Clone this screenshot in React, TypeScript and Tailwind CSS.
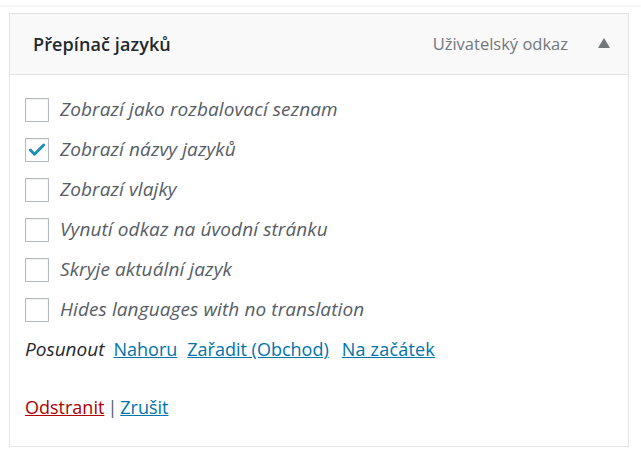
import { Check } from "lucide-react";

const options = [
  { label: "Zobrazí jako rozbalovací seznam", checked: false },
  { label: "Zobrazí názvy jazyků", checked: true },
  { label: "Zobrazí vlajky", checked: false },
  { label: "Vynutí odkaz na úvodní stránku", checked: false },
  { label: "Skryje aktuální jazyk", checked: false },
  { label: "Hides languages with no translation", checked: false },
];

export default function App() {
  return (
    <div className="min-h-screen bg-white font-['Open_Sans',sans-serif] text-[#555d66]">
      <div className="h-[5px] bg-white shadow-[0_1px_3px_rgba(0,0,0,0.08)]" />
      <div className="mx-[9px] mt-[8px] border border-[#e2e4e7] bg-white w-[620px]">
        <div className="flex items-center h-[61px] bg-[#f9f9f9] border-b border-[#e2e4e7] pl-[23px] pr-[18px]">
          <span className="text-[18px] font-semibold text-[#23282d] tracking-[0.1px]">Přepínač jazyků</span>
          <span className="ml-auto text-[16.5px] text-[#72777c]">Uživatelský odkaz</span>
          <svg width="12" height="10" viewBox="0 0 12 10" className="ml-[30px] mb-[3px]">
            <path d="M6 0 L12 10 L0 10 Z" fill="#72777c" />
          </svg>
        </div>
        <div className="pl-[15px] pt-[22px] pb-[26px]">
          <div className="flex flex-col gap-[15px]">
            {options.map((o) => (
              <label key={o.label} className="flex items-center gap-[11px] h-[25px]">
                <span className="w-[24px] h-[24px] border border-[#b4b9be] shadow-[inset_0_1px_2px_rgba(0,0,0,0.07)] bg-white flex items-center justify-center">
                  {o.checked && <Check size={20} strokeWidth={3.5} className="text-[#1e8cbe]" />}
                </span>
                <span className="italic text-[19px] text-[#555d66] tracking-[0.1px]">{o.label}</span>
              </label>
            ))}
          </div>
          <div className="mt-[15px] flex items-center text-[18px] h-[25px]">
            <span className="italic text-[19px] text-[#23282d]">Posunout</span>
            <a href="#" className="ml-[9px] text-[#0073aa] underline">Nahoru</a>
            <a href="#" className="ml-[10px] text-[#0073aa] underline">Zařadit (Obchod)</a>
            <a href="#" className="ml-[13px] text-[#0073aa] underline tracking-[0.2px]">Na začátek</a>
          </div>
          <div className="mt-[33px] flex items-center text-[18px] h-[25px]">
            <a href="#" className="text-[#a00] underline">Odstranit</a>
            <span className="mx-[3px] text-[#555d66]">|</span>
            <a href="#" className="text-[#0073aa] underline">Zrušit</a>
          </div>
        </div>
      </div>
    </div>
  );
}
